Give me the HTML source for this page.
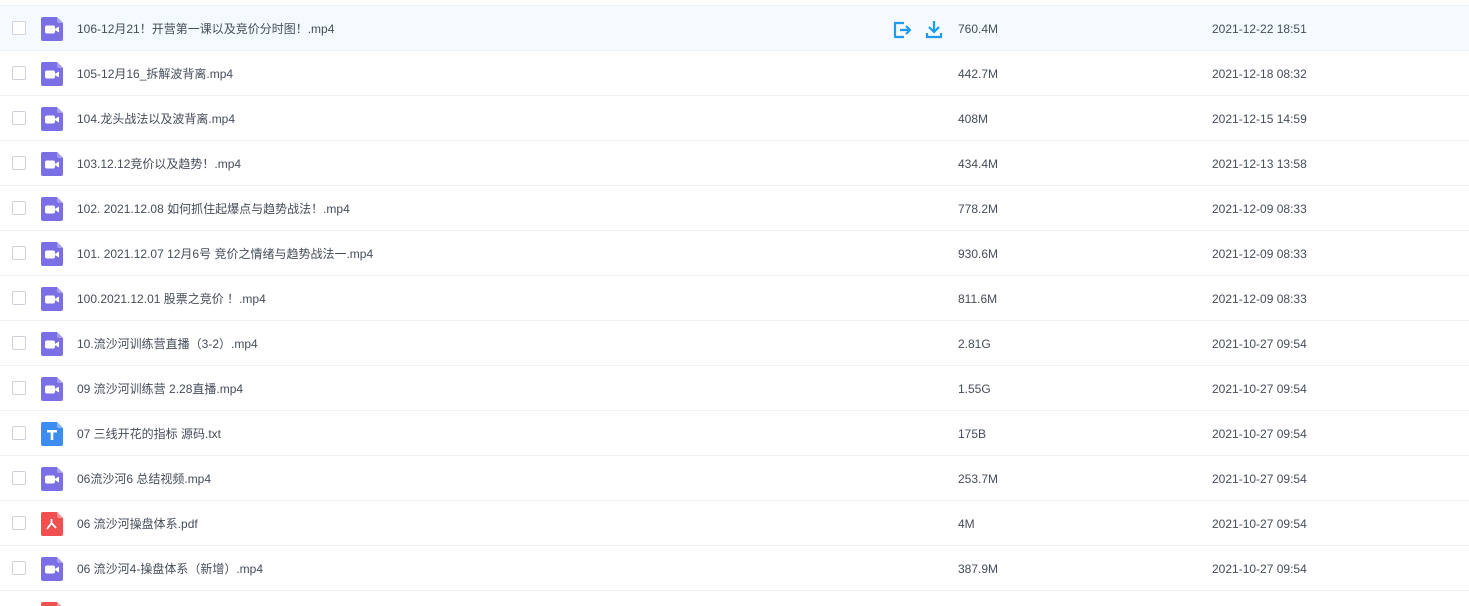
<!DOCTYPE html>
<html><head><meta charset="utf-8"><style>
html{overflow:hidden;height:606px}
body{margin:0;background:#fff;font-family:"Liberation Sans","Noto Sans CJK SC",sans-serif;font-size:12px;color:#454d5a;width:1469px;height:606px;overflow:hidden;position:relative}
.row{position:absolute;left:0;width:1469px;height:44px;border-bottom:1px solid #f1f2f4}
.row.hl{background:#f4faff;border-top:1px solid #e6f0f8;border-bottom:1px solid #e6f0f8}
.cb{position:absolute;left:12px;top:15px;width:12px;height:12px;border:1px solid #cfd3d9;border-radius:2px;background:#fff}
.ic{position:absolute;left:41px;top:11px}
.nm{position:absolute;left:77px;top:16px;line-height:14px;white-space:nowrap}
.sz{position:absolute;left:958px;top:16px;line-height:14px}
.dt{position:absolute;left:1212px;top:16px;line-height:14px}
</style></head><body>
<svg width="0" height="0" style="position:absolute"><defs>
<symbol id="v" viewBox="0 0 22 24"><path d="M2 0H16L22 6V22a2 2 0 0 1-2 2H2a2 2 0 0 1-2-2V2a2 2 0 0 1 2-2z" fill="#7b6fe6"/><path d="M16 0L22 6H18a2 2 0 0 1-2-2z" fill="#a59df0"/><rect x="4" y="8.5" width="10" height="8" rx="2" fill="#fff"/><path d="M13 12.5L18 9.5V15.5z" fill="#fff"/></symbol>
<symbol id="t" viewBox="0 0 22 24"><path d="M2 0H16L22 6V22a2 2 0 0 1-2 2H2a2 2 0 0 1-2-2V2a2 2 0 0 1 2-2z" fill="#3d8cf0"/><path d="M16 0L22 6H18a2 2 0 0 1-2-2z" fill="#8ab9f6"/><path d="M6 8H16V10.5H12.3V18H9.7V10.5H6z" fill="#fff"/></symbol>
<symbol id="p" viewBox="0 0 22 24"><path d="M2 0H16L22 6V22a2 2 0 0 1-2 2H2a2 2 0 0 1-2-2V2a2 2 0 0 1 2-2z" fill="#f0504f"/><path d="M16 0L22 6H18a2 2 0 0 1-2-2z" fill="#f69594"/><path d="M10.5 7V11M10.5 11L6 17M10.5 11L15 16" stroke="#fff" stroke-width="1.8" fill="none"/></symbol>
</defs></svg>

<div class="row hl" style="top:5px"><div class="cb"></div><svg class="ic" width="22" height="24"><use href="#v"/></svg><div class="nm">106-12月21！开营第一课以及竞价分时图！.mp4</div>
<svg style="position:absolute;left:892px;top:15px" width="20" height="18" viewBox="0 0 20 18"><path d="M12 2H3v14h9M8 9h10M14 5l4 4-4 4" stroke="#1c9bef" stroke-width="2.2" fill="none" stroke-linejoin="round"/></svg>
<svg style="position:absolute;left:925px;top:14px" width="18" height="19" viewBox="0 0 18 19"><path d="M9 1v11M4 7l5 5 5-5M2 13v4h14v-4" stroke="#1c9bef" stroke-width="2.2" fill="none"/></svg>
<div class="sz">760.4M</div><div class="dt">2021-12-22 18:51</div></div>

<div class="row" style="top:51px"><div class="cb"></div><svg class="ic" width="22" height="24"><use href="#v"/></svg><div class="nm">105-12月16_拆解波背离.mp4</div><div class="sz">442.7M</div><div class="dt">2021-12-18 08:32</div></div>
<div class="row" style="top:96px"><div class="cb"></div><svg class="ic" width="22" height="24"><use href="#v"/></svg><div class="nm">104.龙头战法以及波背离.mp4</div><div class="sz">408M</div><div class="dt">2021-12-15 14:59</div></div>
<div class="row" style="top:141px"><div class="cb"></div><svg class="ic" width="22" height="24"><use href="#v"/></svg><div class="nm">103.12.12竞价以及趋势！.mp4</div><div class="sz">434.4M</div><div class="dt">2021-12-13 13:58</div></div>
<div class="row" style="top:186px"><div class="cb"></div><svg class="ic" width="22" height="24"><use href="#v"/></svg><div class="nm">102. 2021.12.08 如何抓住起爆点与趋势战法！.mp4</div><div class="sz">778.2M</div><div class="dt">2021-12-09 08:33</div></div>
<div class="row" style="top:231px"><div class="cb"></div><svg class="ic" width="22" height="24"><use href="#v"/></svg><div class="nm">101. 2021.12.07 12月6号 竞价之情绪与趋势战法一.mp4</div><div class="sz">930.6M</div><div class="dt">2021-12-09 08:33</div></div>
<div class="row" style="top:276px"><div class="cb"></div><svg class="ic" width="22" height="24"><use href="#v"/></svg><div class="nm">100.2021.12.01 股票之竞价 ！.mp4</div><div class="sz">811.6M</div><div class="dt">2021-12-09 08:33</div></div>
<div class="row" style="top:321px"><div class="cb"></div><svg class="ic" width="22" height="24"><use href="#v"/></svg><div class="nm">10.流沙河训练营直播（3-2）.mp4</div><div class="sz">2.81G</div><div class="dt">2021-10-27 09:54</div></div>
<div class="row" style="top:366px"><div class="cb"></div><svg class="ic" width="22" height="24"><use href="#v"/></svg><div class="nm">09 流沙河训练营 2.28直播.mp4</div><div class="sz">1.55G</div><div class="dt">2021-10-27 09:54</div></div>
<div class="row" style="top:411px"><div class="cb"></div><svg class="ic" width="22" height="24"><use href="#t"/></svg><div class="nm">07 三线开花的指标 源码.txt</div><div class="sz">175B</div><div class="dt">2021-10-27 09:54</div></div>
<div class="row" style="top:456px"><div class="cb"></div><svg class="ic" width="22" height="24"><use href="#v"/></svg><div class="nm">06流沙河6 总结视频.mp4</div><div class="sz">253.7M</div><div class="dt">2021-10-27 09:54</div></div>
<div class="row" style="top:501px"><div class="cb"></div><svg class="ic" width="22" height="24"><use href="#p"/></svg><div class="nm">06 流沙河操盘体系.pdf</div><div class="sz">4M</div><div class="dt">2021-10-27 09:54</div></div>
<div class="row" style="top:546px"><div class="cb"></div><svg class="ic" width="22" height="24"><use href="#v"/></svg><div class="nm">06 流沙河4-操盘体系（新增）.mp4</div><div class="sz">387.9M</div><div class="dt">2021-10-27 09:54</div></div>
<div class="row" style="top:591px"><svg class="ic" width="22" height="24"><use href="#p"/></svg></div>
</body></html>
